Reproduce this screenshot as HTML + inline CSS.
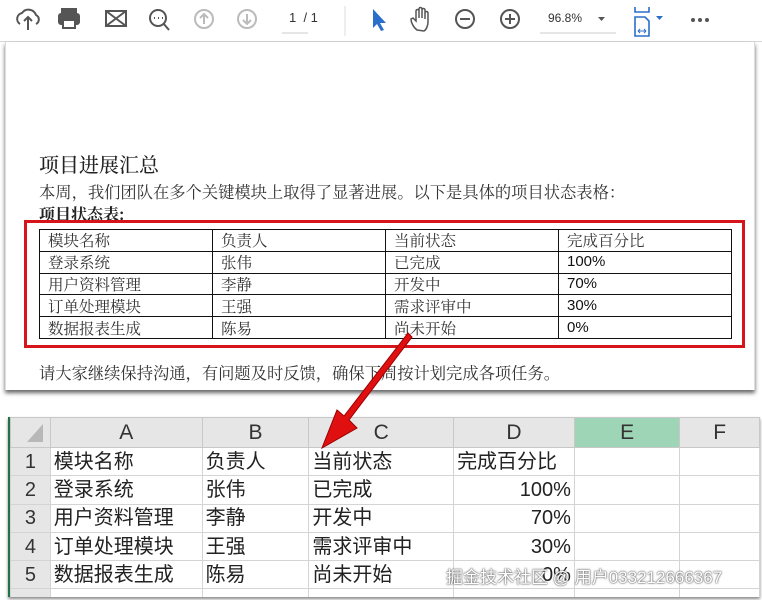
<!DOCTYPE html>
<html><head><meta charset="utf-8"><style>
*{margin:0;padding:0;box-sizing:border-box}
body{width:762px;height:600px;background:#fff;position:relative;overflow:hidden;font-family:"Liberation Sans","Noto Sans CJK SC",sans-serif}
.abs{position:absolute}
.tb{left:0;top:0;width:762px;height:42px;background:#fff;border-bottom:1px solid #d6d6d6}
.page{left:5px;top:42px;width:750px;height:348px;border-left:1px solid #ddd;border-right:1px solid #ddd;box-shadow:0 3px 4px #666}
.cjk{font-family:"Noto Serif CJK SC","Liberation Serif",serif;color:#222;white-space:nowrap}
table.p{position:absolute;left:39px;top:229px;width:693px;border-collapse:collapse;font-size:15.5px;table-layout:fixed}
table.p td{border:1px solid #111;height:21.8px;padding:0 0 0 8px;line-height:20px;font-family:"Noto Serif CJK SC",serif;color:#333;overflow:hidden;white-space:nowrap}
table.p td.n{font-family:"Liberation Sans",sans-serif;font-size:15px;color:#111}
.xl{left:8px;top:417px;width:752px;height:180px;border-left:2px solid #217346;box-shadow:0 2px 3px #888;overflow:hidden}
table.x{border-collapse:collapse;table-layout:fixed;font-family:"Liberation Sans","Noto Sans CJK SC",sans-serif;font-size:20px;color:#222}
table.x td{border:1px solid #d4d4d4;height:28.3px;line-height:26px;padding:0 3px;white-space:nowrap;overflow:hidden}
table.x tr.h td{background:#e6e6e6;text-align:center;border-color:#c8c8c8;height:30px;line-height:28px;color:#333;font-size:21px}
table.x td.r{background:#e6e6e6;text-align:center;color:#333;padding:0}
</style></head><body>
<div class="abs tb">
<svg width="762" height="42" viewBox="0 0 762 42" fill="none" stroke="#555" stroke-width="2">
<path d="M20 24a6 6 0 0 1 2-11a8 8 0 0 1 14 2a5 5 0 0 1 0 9M28 30V17m-4 4l4-4 4 4"/>
<rect x="62" y="9" width="14" height="5" fill="#555"/><rect x="59" y="14" width="20" height="10" rx="2" fill="#555"/><rect x="63" y="20" width="12" height="8" fill="#fff"/>
<rect x="106" y="11" width="20" height="15"/><path d="M106 11l20 15M126 11l-20 15"/>
<circle cx="158" cy="18" r="8"/><path d="M163 23l6 7"/><path d="M154 18h1m3 0h1m3 0h1" stroke-width="2"/>
<g stroke="#bbb"><circle cx="204" cy="19" r="9"/><path d="M204 24V14m-4 4l4-4 4 4"/><circle cx="247" cy="19" r="9"/><path d="M247 14v10m-4-4l4 4 4-4"/></g>
<path d="M282 33h26" stroke="#ccc" stroke-width="1"/>
<path d="M345 6v30" stroke="#ddd" stroke-width="1"/>
<path d="M373 9l0 19 4-4 4 7 3-1-4-7 6 0z" fill="#2a6fc9" stroke="none"/>
<path d="M417 30c-4-3-6-8-6-11l2-1 3 3V11a1.5 1.5 0 0 1 3 0v7V9a1.5 1.5 0 0 1 3 0v9V10a1.5 1.5 0 0 1 3 0v9v-6a1.5 1.5 0 0 1 3 0v9c0 4-2 8-4 9z" stroke-width="1.5"/>
<circle cx="465" cy="19" r="9"/><path d="M460 19h10"/>
<circle cx="510" cy="19" r="9"/><path d="M505 19h10M510 14v10"/>
<path d="M540 33h76" stroke="#ccc" stroke-width="1"/>
<path d="M598 17h7l-3.5 4z" fill="#555" stroke="none"/>
<g stroke="#2a6fc9" stroke-width="1.6"><path d="M635 7v5h14V7"/><path d="M635 36V17h10l4 4v15z"/><path d="M638 31h8m-8 0l2-2m-2 2l2 2m6-2l-2-2m2 2l-2 2" stroke-width="1"/></g>
<path d="M656 16h7l-3.5 4z" fill="#2a6fc9" stroke="none"/>
<g fill="#555" stroke="none"><circle cx="693" cy="20" r="2"/><circle cx="700" cy="20" r="2"/><circle cx="707" cy="20" r="2"/></g>
</svg>
<div class="abs" style="left:289px;top:10px;font-size:13px;color:#333">1 &nbsp;/ 1</div>
<div class="abs" style="left:548px;top:11px;font-size:12px;color:#333">96.8%</div>
</div>
<div class="abs page"></div>
<div class="abs cjk" style="left:39px;top:149px;font-size:20px;font-weight:500">项目进展汇总</div>
<div class="abs cjk" style="left:39px;top:179px;font-size:16.3px;color:#333">本周，我们团队在多个关键模块上取得了显著进展。以下是具体的项目状态表格：</div>
<div class="abs cjk" style="left:39px;top:202px;font-size:16px;font-weight:700">项目状态表:</div>
<table class="p">
<tr><td style="width:173px">模块名称</td><td style="width:173px">负责人</td><td style="width:173px">当前状态</td><td>完成百分比</td></tr>
<tr><td>登录系统</td><td>张伟</td><td>已完成</td><td class="n">100%</td></tr>
<tr><td>用户资料管理</td><td>李静</td><td>开发中</td><td class="n">70%</td></tr>
<tr><td>订单处理模块</td><td>王强</td><td>需求评审中</td><td class="n">30%</td></tr>
<tr><td>数据报表生成</td><td>陈易</td><td>尚未开始</td><td class="n">0%</td></tr>
</table>
<div class="abs" style="left:24px;top:220px;width:721px;height:128px;border:3px solid #d7141a"></div>
<div class="abs cjk" style="left:39px;top:360px;font-size:16.3px;color:#333">请大家继续保持沟通，有问题及时反馈，确保下周按计划完成各项任务。</div>
<div class="abs xl">
<table class="x">
<colgroup><col style="width:40px"><col style="width:152px"><col style="width:107px"><col style="width:145px"><col style="width:121px"><col style="width:106px"><col style="width:80px"></colgroup>
<tr class="h"><td style="position:relative"><svg class="abs" style="left:14px;top:4px" width="20" height="22"><path d="M18 2v18H2z" fill="#b8b8b8"/></svg></td><td>A</td><td>B</td><td>C</td><td>D</td><td style="background:#9fd5b7">E</td><td>F</td></tr>
<tr><td class="r">1</td><td>模块名称</td><td>负责人</td><td>当前状态</td><td>完成百分比</td><td></td><td></td></tr>
<tr><td class="r">2</td><td>登录系统</td><td>张伟</td><td>已完成</td><td style="text-align:right">100%</td><td></td><td></td></tr>
<tr><td class="r">3</td><td>用户资料管理</td><td>李静</td><td>开发中</td><td style="text-align:right">70%</td><td></td><td></td></tr>
<tr><td class="r">4</td><td>订单处理模块</td><td>王强</td><td>需求评审中</td><td style="text-align:right">30%</td><td></td><td></td></tr>
<tr><td class="r">5</td><td>数据报表生成</td><td>陈易</td><td>尚未开始</td><td style="text-align:right">0%</td><td></td><td></td></tr>
<tr><td class="r"></td><td></td><td></td><td></td><td></td><td></td><td></td></tr>
</table>
</div>
<div class="abs" style="left:446px;top:563px;font-size:17px;color:#fff;text-shadow:0 0 2px #555,0 0 1px #333;white-space:nowrap">掘金技术社区 @ 用户033212666367</div>
<svg class="abs" style="left:0;top:0" width="762" height="600"><path d="M408 333L412 337L349 420L357 428L322 448L337 410L344 416Z" fill="#e01010" stroke="#900" stroke-width="1"/></svg>
</body></html>
